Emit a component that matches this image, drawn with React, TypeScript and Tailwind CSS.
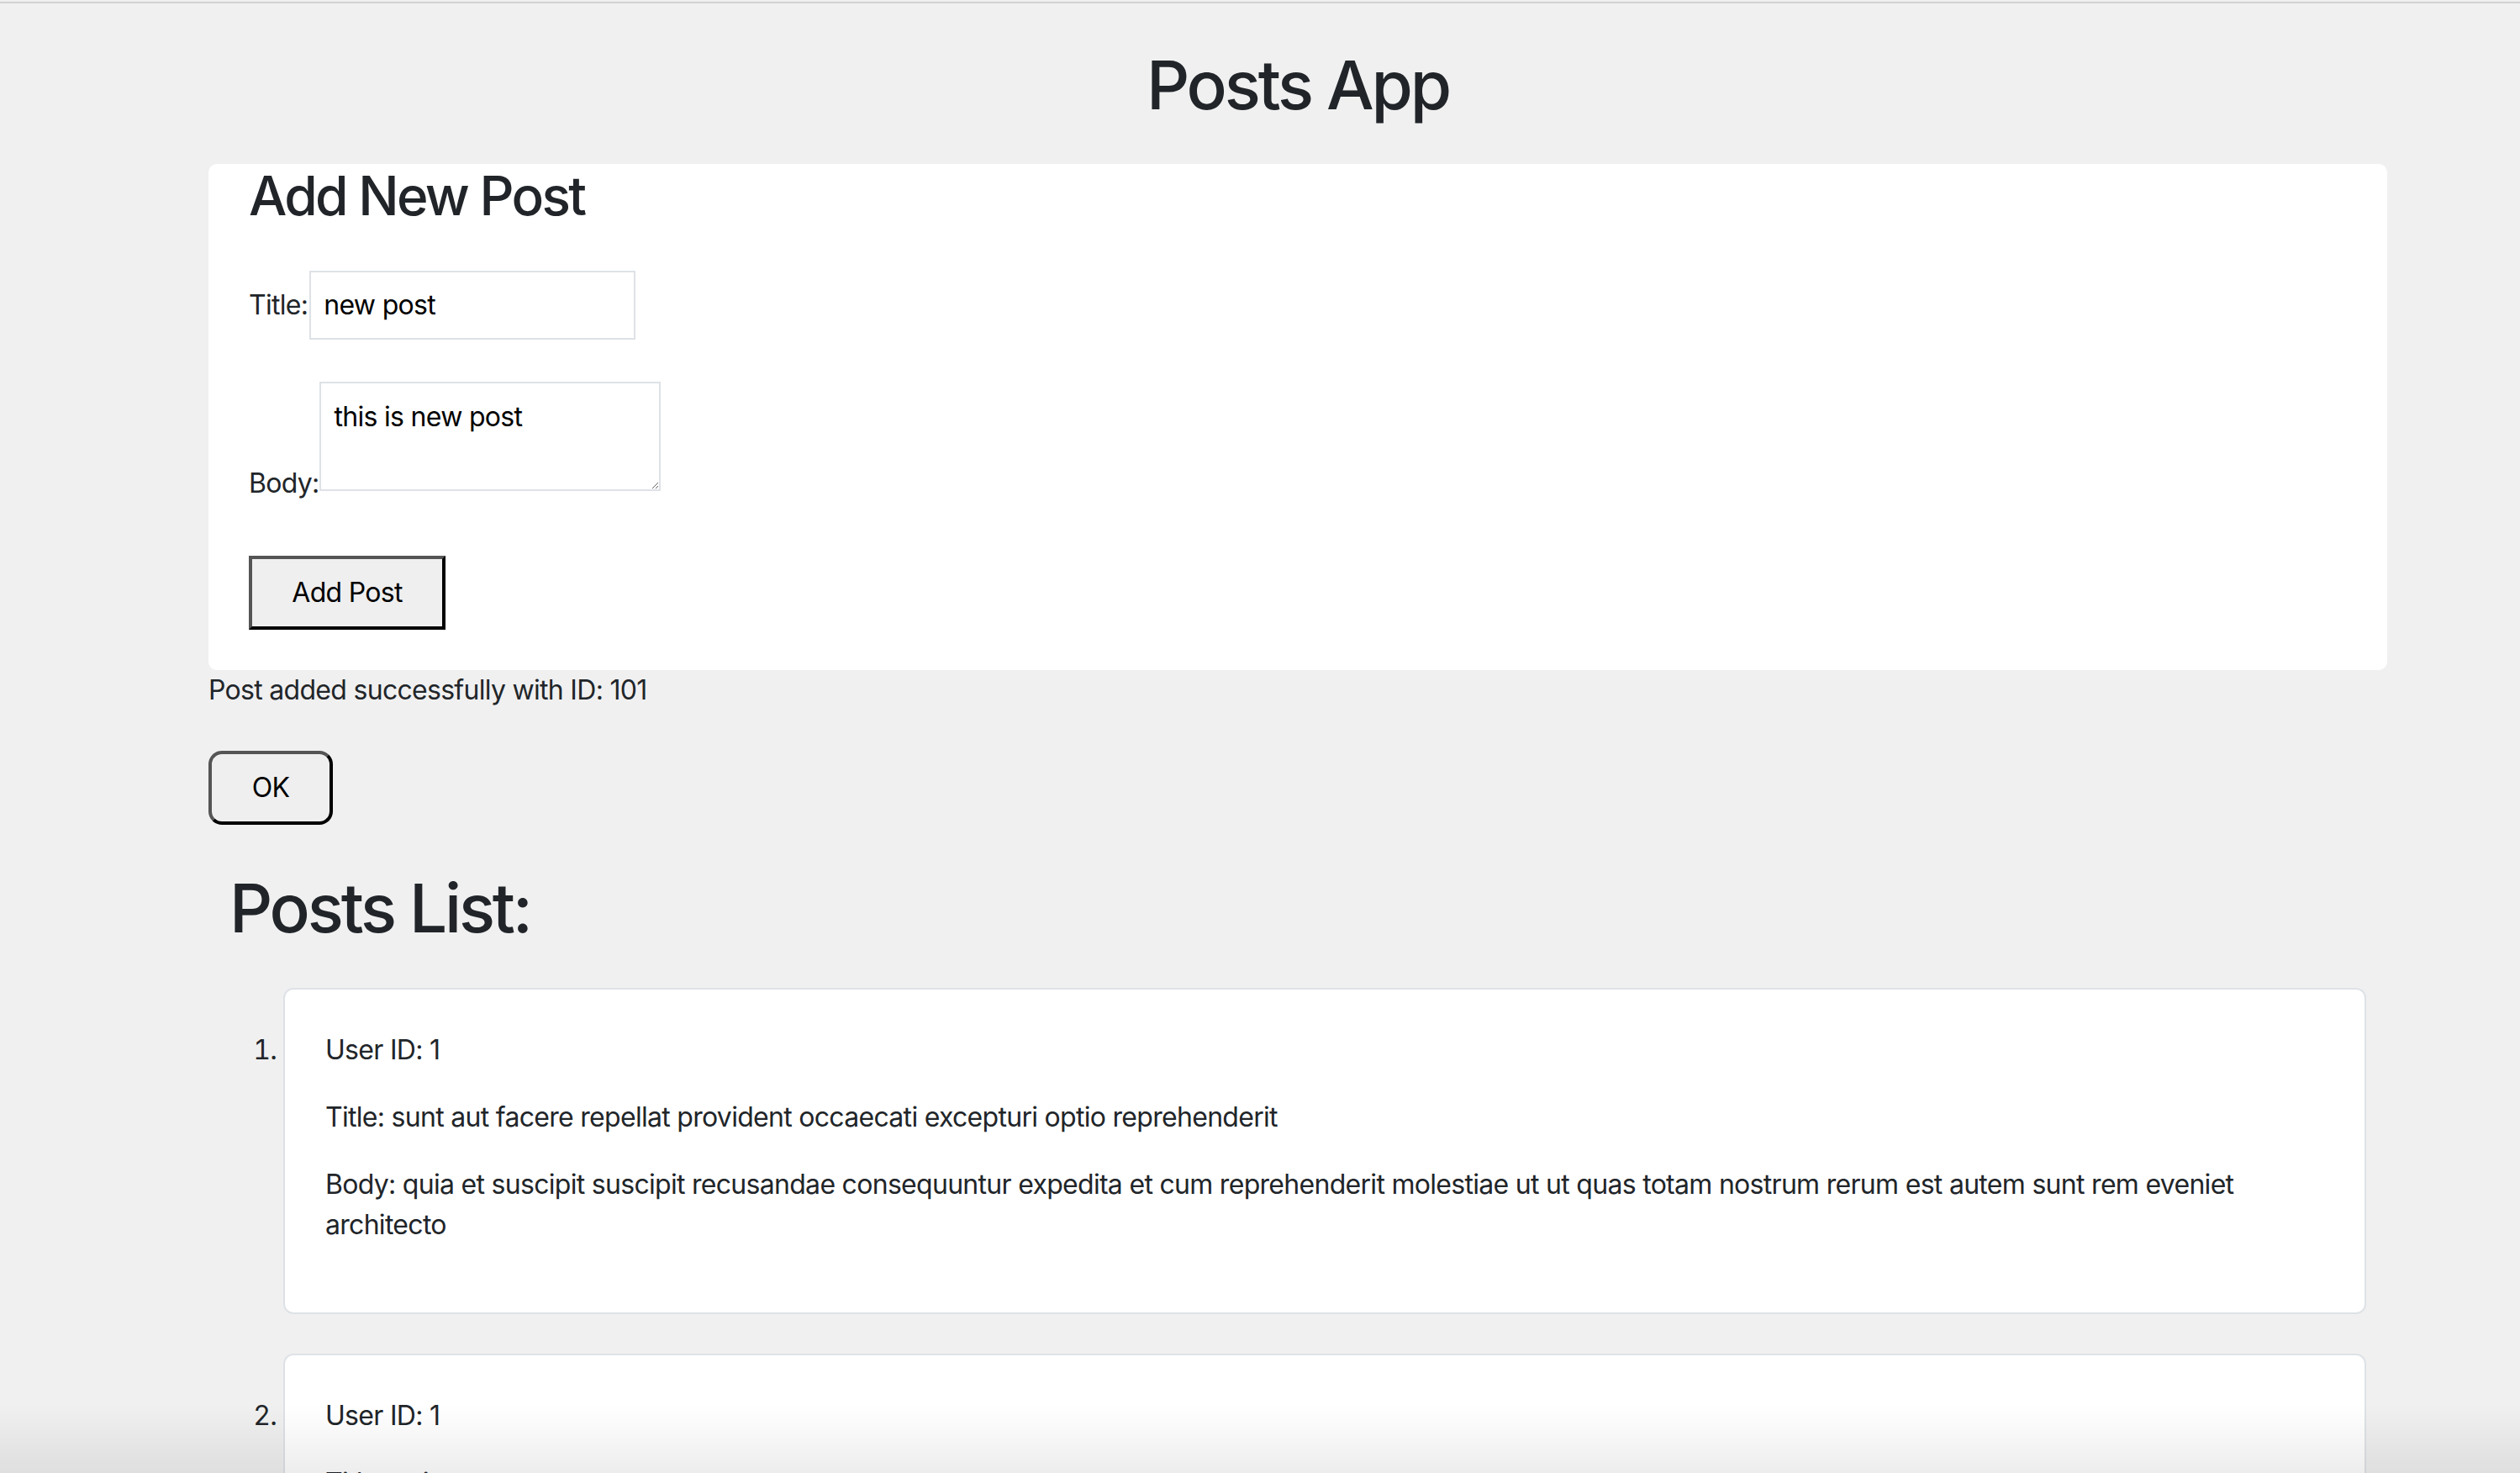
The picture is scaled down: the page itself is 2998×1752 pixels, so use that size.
import { useState } from 'react';

interface Post {
  userId: number;
  id: number;
  title: string;
  body: string;
}

const posts: Post[] = [
  {
    userId: 1,
    id: 1,
    title: 'sunt aut facere repellat provident occaecati excepturi optio reprehenderit',
    body: 'quia et suscipit suscipit recusandae consequuntur expedita et cum reprehenderit molestiae ut ut quas totam nostrum rerum est autem sunt rem eveniet architecto',
  },
  {
    userId: 1,
    id: 2,
    title: 'qui est esse',
    body: 'est rerum tempore vitae sequi sint nihil reprehenderit dolor beatae ea dolores neque fugiat blanditiis voluptate porro vel nihil molestiae ut reiciendis qui aperiam non debitis possimus qui neque nisi nulla',
  },
  {
    userId: 1,
    id: 3,
    title: 'ea molestias quasi exercitationem repellat qui ipsa sit aut',
    body: 'et iusto sed quo iure voluptatem occaecati omnis eligendi aut ad voluptatem doloribus vel accusantium quis pariatur molestiae porro eius odio et labore et velit aut',
  },
];

export default function App() {
  const [title, setTitle] = useState('new post');
  const [body, setBody] = useState('this is new post');

  return (
    <div className="min-h-screen bg-[#f0f0f0] text-[#212529] text-[32px] leading-[1.5] tracking-[-0.022em] font-['Inter','Liberation_Sans',sans-serif]">
      {/* window edge */}
      <div className="pt-[2px]">
        <div className="h-[2px] bg-[#d2d2d2]" />
      </div>

      <div className="ml-[248px] w-[2592px]">
        <h1 className="pt-[49px] text-center text-[80px] leading-[1.2] font-medium tracking-[-0.04em]">Posts App</h1>

        {/* Add form */}
        <div className="mt-[46px] bg-white rounded-[10px] px-[48px] pb-[48px]">
          <h2 className="text-[64px] leading-[1.2] font-medium tracking-[-0.042em]">Add New Post</h2>

          <div className="mt-[50px] flex items-center gap-[2px]">
            <label htmlFor="title">Title:</label>
            <input
              id="title"
              value={title}
              onChange={(e) => setTitle(e.target.value)}
              className="w-[388px] h-[82px] px-[15px] border-2 border-[#dee2e6] bg-white text-black tracking-[-0.022em] outline-none"
            />
          </div>

          <div className="mt-[50px] flex items-end">
            <label htmlFor="body" className="mb-[-15px]">Body:</label>
            <textarea
              id="body"
              value={body}
              onChange={(e) => setBody(e.target.value)}
              className="w-[406px] h-[130px] p-[16px] border-2 border-[#dee2e6] bg-white text-black tracking-[-0.022em] outline-none resize"
            />
          </div>

          <button className="mt-[77px] w-[234px] h-[88px] bg-[#efefef] text-black tracking-[-0.022em] border-[4px] border-solid border-t-[#555] border-l-[#555] border-r-black border-b-black">
            Add Post
          </button>
        </div>

        <p>Post added successfully with ID: 101</p>

        <button className="mt-[48px] w-[148px] h-[88px] rounded-[16px] bg-[#efefef] text-black tracking-[-0.022em] border-[4px] border-solid border-t-[#555] border-l-[#555] border-r-black border-b-black">
          OK
        </button>

        {/* Posts list */}
        <div className="mx-[25px]">
          <h1 className="mt-[51px] text-[80px] leading-[1.2] font-medium tracking-[-0.04em]">Posts List:</h1>
          <ol className="mt-[47px] list-decimal pl-[64px]">
            {posts.map((post) => (
              <li
                key={post.id}
                className="mb-[47px] bg-white border-2 border-[#dee2e6] rounded-[12px] p-[48px]"
              >
                <p className="mb-[32px]">User ID: {post.userId}</p>
                <p className="mb-[32px]">Title: {post.title}</p>
                <p className="mb-[32px]">Body: {post.body}</p>
              </li>
            ))}
          </ol>
        </div>
      </div>

      {/* bottom window shade */}
      <div className="fixed inset-x-0 bottom-0 h-[80px] pointer-events-none bg-linear-to-b from-transparent to-black/[0.07]" />
    </div>
  );
}
